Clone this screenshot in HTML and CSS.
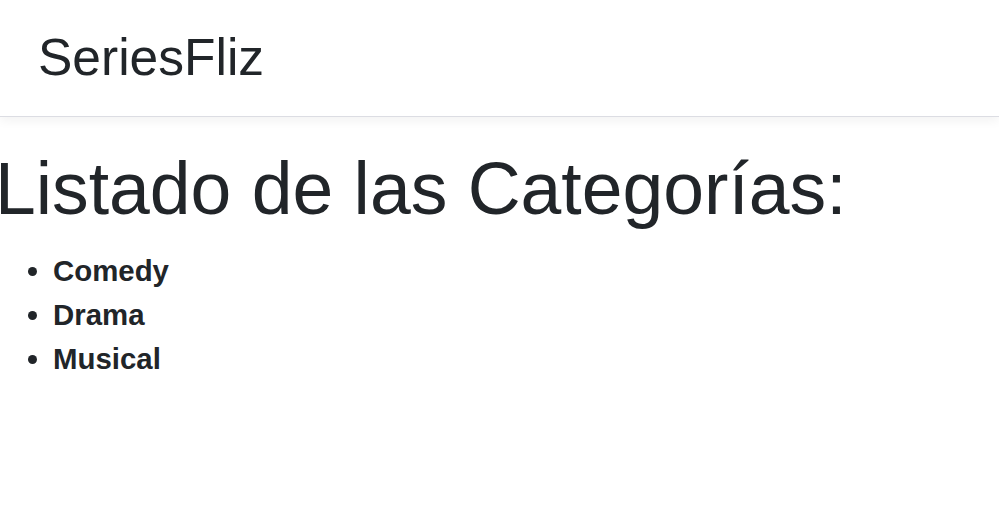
FILE: index.html
```html
<!DOCTYPE html>
<html lang="es">
<head>
<meta charset="utf-8">
<title>SeriesFliz</title>
<link rel="stylesheet" href="styles.css">
</head>
<body>
<nav class="navbar">
  <a class="brand" href="#">SeriesFliz</a>
</nav>
<main class="content">
  <h1 class="title">Listado de las Categorías:</h1>
  <ul class="cats">
    <li>Comedy</li>
    <li>Drama</li>
    <li>Musical</li>
  </ul>
</main>
</body>
</html>
```

FILE: styles.css
```css
html, body {
  margin: 0;
  padding: 0;
  background: #fff;
  color: #212529;
  font-family: "Liberation Sans", Arial, sans-serif;
  overflow: hidden;
}

.navbar {
  height: 116px;
  display: flex;
  align-items: center;
  padding: 0 38px;
  background: #fff;
  border-bottom: 1px solid #dcdde3;
  box-shadow: 0 4px 10px rgba(0, 0, 0, 0.05);
}

.brand {
  font-size: 51.5px;
  color: #212529;
  text-decoration: none;
  line-height: 1;
}

.content {
  padding-top: 29px;
}

.title {
  margin: 0 0 15px -5px;
  font-size: 73.3px;
  font-weight: 400;
  line-height: 1.2;
}

.cats {
  margin: 0;
  padding-left: 53px;
  font-size: 29.4px;
  font-weight: 700;
  line-height: 44px;
}
```
